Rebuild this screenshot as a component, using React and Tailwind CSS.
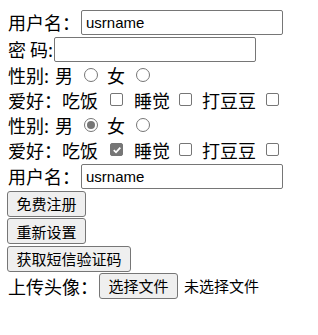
import React from "react";

const CJK = "font-['Noto_Sans_CJK_SC',sans-serif]";

function TextInput() {
  return (
    <input
      type="text"
      defaultValue="usrname"
      className="w-[202px] h-[25px] border border-[#767676] rounded-[2px] bg-white px-[4px] text-[15px] text-black font-['Liberation_Sans','Noto_Sans_CJK_SC',sans-serif] outline-none"
    />
  );
}

function PwInput() {
  return (
    <input
      type="password"
      className="w-[202px] h-[25px] border border-[#767676] rounded-[2px] bg-white px-[4px] text-[15px] outline-none"
    />
  );
}

function Radio({ checked, className = "" }) {
  return (
    <span
      className={
        "inline-flex items-center justify-center w-[14px] h-[14px] rounded-full border border-[#767676] bg-white shrink-0 " +
        className
      }
    >
      {checked ? <span className="w-[8px] h-[8px] rounded-full bg-[#767676]" /> : null}
    </span>
  );
}

function Check({ checked, className = "" }) {
  return (
    <span
      className={
        "inline-flex items-center justify-center w-[13px] h-[13px] rounded-[2px] border border-[#767676] shrink-0 " +
        (checked ? "bg-[#767676] " : "bg-white ") +
        className
      }
    >
      {checked ? (
        <svg width="10" height="10" viewBox="0 0 10 10">
          <path d="M1.8 5.2 L4 7.3 L8.3 2.6" fill="none" stroke="white" strokeWidth="1.8" />
        </svg>
      ) : null}
    </span>
  );
}

function Btn({ children, className = "" }) {
  return (
    <button
      className={
        "h-[26px] px-[8.5px] border border-[#767676] rounded-[3px] bg-[#efefef] text-[15px] leading-none text-black whitespace-nowrap " +
        className
      }
    >
      {children}
    </button>
  );
}

function GenderRow({ maleChecked }) {
  return (
    <div className="flex items-center h-[25px]">
      <span className="w-[47px] whitespace-nowrap">性别:</span>
      <span className="w-[18px]">男</span>
      <Radio checked={maleChecked} className="ml-[11px]" />
      <span className="ml-[9px] w-[18px]">女</span>
      <Radio className="ml-[11px]" />
    </div>
  );
}

function HobbyRow({ eatChecked }) {
  return (
    <div className="flex items-center h-[25px]">
      <span className="w-[90px] whitespace-nowrap">爱好：吃饭</span>
      <Check checked={eatChecked} className="ml-[12px]" />
      <span className="ml-[11px] w-[36px] whitespace-nowrap">睡觉</span>
      <Check className="ml-[9px]" />
      <span className="ml-[10px] w-[54px] whitespace-nowrap">打豆豆</span>
      <Check className="ml-[10px]" />
    </div>
  );
}

export default function App() {
  return (
    <div className={"w-[318px] h-[335px] bg-white text-black pt-[8px] pl-[8px] text-[18px] leading-none " + CJK}>
      <div className="flex items-center h-[28px]">
        <span className="w-[73px] whitespace-nowrap">用户名：</span>
        <TextInput />
      </div>
      <div className="flex items-center h-[26px]">
        <span className="w-[46px] whitespace-nowrap">密 码:</span>
        <PwInput />
      </div>
      <GenderRow maleChecked={false} />
      <HobbyRow eatChecked={false} />
      <GenderRow maleChecked={true} />
      <HobbyRow eatChecked={true} />
      <div className="flex items-center h-[28px]">
        <span className="w-[73px] whitespace-nowrap">用户名：</span>
        <TextInput />
      </div>
      <div className="flex items-center h-[27.5px] -ml-[1px]">
        <Btn>免费注册</Btn>
      </div>
      <div className="flex items-center h-[27.5px] -ml-[1px]">
        <Btn>重新设置</Btn>
      </div>
      <div className="flex items-center h-[27.5px] -ml-[1px]">
        <Btn>获取短信验证码</Btn>
      </div>
      <div className="flex items-center h-[26px]">
        <span className="w-[91px] whitespace-nowrap">上传头像：</span>
        <Btn className="h-[25px]">选择文件</Btn>
        <span className="ml-[6px] text-[15px] whitespace-nowrap">未选择文件</span>
      </div>
    </div>
  );
}
